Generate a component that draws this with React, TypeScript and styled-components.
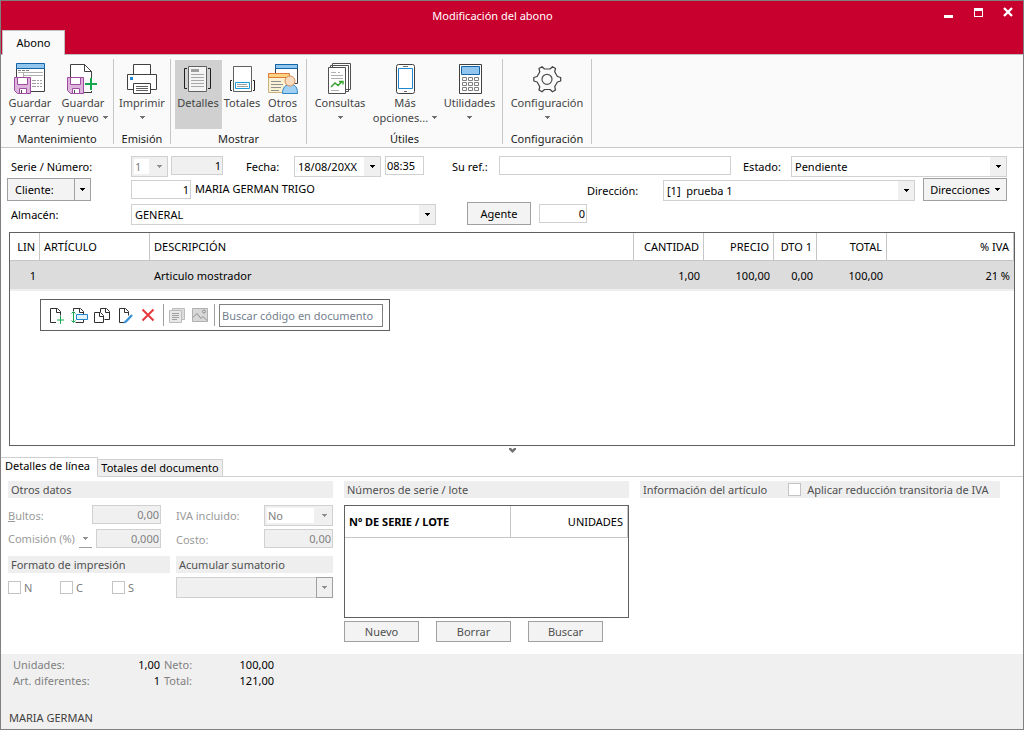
import React, { useState } from "react";
import styled, { createGlobalStyle, css } from "styled-components";

const GlobalStyle = createGlobalStyle`
  *, *::before, *::after { box-sizing: border-box; }
  body { margin: 0; background: #fff; }
  body, button, input, select {
    font-family: "Noto Sans", "Open Sans", "Liberation Sans", sans-serif;
    font-size: 11px;
    line-height: 15px;
    color: #000;
  }
  button, input, select { margin: 0; border-radius: 0; outline-offset: -2px; }
`;

const red = "#c8002d";
const line = "#d0d0d0";
const dark = "#606060";

const Window = styled.div`
  min-height: 100vh;
  display: flex;
  flex-direction: column;
  border: 1px solid #808080;
  background: #fff;
`;

/* ---------- title bar ---------- */
const TitleBar = styled.header`
  display: grid;
  grid-template-columns: 1fr auto 1fr;
  height: 29px;
  background: ${red};
  color: #fff;
`;
const Title = styled.h1`
  grid-column: 2;
  margin: 0;
  padding: 7px 39px 0 0;
  font-size: 11px;
  line-height: 15px;
  font-weight: 400;
`;
const WindowButtons = styled.div`
  display: flex;
  justify-content: flex-end;
  align-items: flex-start;
  gap: 14px;
  padding: 4px 7px 0 0;
`;
const WindowButton = styled.button`
  display: flex;
  padding: 0;
  border: 0;
  background: none;
  color: #fff;
`;
const RibbonTabs = styled.nav`
  display: flex;
  height: 24px;
  padding-left: 1px;
  background: ${red};
`;
const RibbonTab = styled.button`
  width: 63px;
  height: 25px;
  padding: 0 0 2px;
  border: 1px solid #c0c0c0;
  border-bottom: 0;
  background: #fafafa;
  z-index: 1;
`;

/* ---------- ribbon ---------- */
const Ribbon = styled.div`
  display: flex;
  height: 94px;
  padding-top: 4px;
  border-top: 1px solid #c0c0c0;
  border-bottom: 1px solid #c8c8c8;
  background: #fafafa;
`;
const Group = styled.section<{ $width: number }>`
  display: flex;
  flex-direction: column;
  width: ${(p) => p.$width}px;
  height: 85px;
  border-right: 1px solid #c6c6c6;
`;
const GroupButtons = styled.div<{ $gap?: number }>`
  display: flex;
  justify-content: center;
  gap: ${(p) => p.$gap ?? 0}px;
  padding-top: 1px;
`;
const GroupName = styled.h2`
  margin: 2px 0 0;
  text-align: center;
  font-size: 11px;
  line-height: 15px;
  font-weight: 400;
  color: #1c1c1c;
`;
const RibbonButton = styled.button<{ $width: number; $active?: boolean }>`
  display: flex;
  flex-direction: column;
  align-items: center;
  width: ${(p) => p.$width}px;
  height: 69px;
  padding: 3px 0 0;
  border: 0;
  background: ${(p) => (p.$active ? "#d0d0d0" : "none")};
  color: #444;
  white-space: nowrap;
  svg { flex: none; }
`;
const ButtonLine = styled.span`
  display: flex;
  align-items: center;
  gap: 4px;
  height: 15px;
`;

/* ---------- form ---------- */
const Form = styled.form`
  display: flex;
  flex-direction: column;
  gap: 1px;
  padding: 6px 16px 0 6px;
`;
const Row = styled.div`
  display: flex;
  align-items: flex-end;
  height: 23px;
`;
const Label = styled.label<{ $width: number; $muted?: boolean }>`
  flex: none;
  width: ${(p) => p.$width}px;
  white-space: nowrap;
  ${(p) => (p.$muted ? css`color: #9a9a9a;` : css`margin-bottom: 3px;`)}
`;
const Indent = styled.span`
  padding-left: 15px;
`;
const Spacer = styled.span<{ $width: number }>`
  flex: none;
  width: ${(p) => p.$width}px;
`;
const Field = styled.input<{ $width?: number; $right?: boolean }>`
  ${(p) => (p.$width ? `flex: none; width: ${p.$width}px;` : "flex: 1 1 0; min-width: 0;")}
  height: 19px;
  margin-bottom: 2px;
  padding: 0 1px 1px;
  border: 1px solid ${line};
  background: #fff;
  text-align: ${(p) => (p.$right ? "right" : "left")};
  &:disabled, &:read-only { background: #f0f0f0; }
  &:disabled { color: #808080; }
`;
const CommissionField = styled(Field)`
  justify-self: end;
`;
const SelectBox = styled.span<{ $width?: number }>`
  display: grid;
  ${(p) => (p.$width ? `flex: none; width: ${p.$width}px;` : "flex: 1 1 0; min-width: 0;")}
`;
const SelectInput = styled.select<{ $plain?: boolean }>`
  grid-area: 1 / 1;
  width: 100%;
  height: 21px;
  padding: 0 18px 0 3px;
  border: 1px solid ${line};
  appearance: none;
  background: linear-gradient(#f0f0f0, #f0f0f0) right / 16px 100% no-repeat #fff;
  &:disabled {
    color: #808080;
    opacity: 1;
    background: ${(p) => (p.$plain ? "#f0f0f0" : "linear-gradient(#fff, #fff) 2px 2px / calc(100% - 20px) 15px no-repeat #f0f0f0")};
  }
`;
const SelectArrow = styled.span<{ $boxed?: boolean }>`
  grid-area: 1 / 1;
  justify-self: end;
  display: flex;
  align-items: center;
  justify-content: center;
  width: 17px;
  height: 21px;
  pointer-events: none;
  ${(p) => p.$boxed && css`border: 1px solid #a0a0a0;`}
`;
const PushButton = styled.button<{ $width: number; $muted?: boolean }>`
  display: flex;
  flex: none;
  align-items: center;
  justify-content: center;
  gap: 5px;
  width: ${(p) => p.$width}px;
  height: ${(p) => (p.$muted ? 21 : 23)}px;
  padding: 0;
  border: 1px solid #a0a0a0;
  background: #f3f3f3;
  color: ${(p) => (p.$muted ? "#505050" : "#000")};
`;
const SplitButton = styled.span`
  display: flex;
  width: 84px;
  flex: none;
`;
const SplitMain = styled(PushButton)`
  justify-content: flex-start;
  padding-left: 7px;
`;
const SplitArrow = styled(PushButton)`
  border-left: 0;
`;
const ClientName = styled.output`
  flex: none;
  width: 392px;
  margin-bottom: 5px;
  padding-left: 4px;
`;

/* ---------- document lines ---------- */
const LinesPanel = styled.section`
  height: 214px;
  margin: 7px 8px 0;
  border: 1px solid ${dark};
`;
const LinesTable = styled.table`
  width: 100%;
  table-layout: fixed;
  border-collapse: separate;
  border-spacing: 0;
  font-size: 11px;
`;
const Th = styled.th<{ $right?: boolean }>`
  height: 28px;
  padding: 0 4px;
  border-right: 1px solid #c6c6c6;
  border-bottom: 1px solid #c6c6c6;
  font-weight: 400;
  white-space: nowrap;
  text-align: ${(p) => (p.$right ? "right" : "left")};
`;
const Td = styled.td<{ $right?: boolean }>`
  height: 30px;
  padding: 0 4px;
  border-bottom: 2px solid #eee;
  background: #dcdcdc;
  white-space: nowrap;
  text-align: ${(p) => (p.$right ? "right" : "left")};
`;
const LineTools = styled.div`
  display: flex;
  align-items: center;
  width: 350px;
  height: 32px;
  margin: 8px 0 0 30px;
  padding: 0 6px 0 4px;
  border: 1px solid ${dark};
`;
const ToolButton = styled.button`
  display: flex;
  justify-content: center;
  width: 23px;
  padding: 0;
  border: 0;
  background: none;
`;
const ToolDivider = styled.span`
  width: 1px;
  height: 22px;
  margin: 0 1px 0 3px;
  background: #a0a0a0;
`;
const Search = styled.input`
  flex: 1 1 0;
  min-width: 0;
  height: 23px;
  margin-left: 3px;
  padding: 0 2px;
  border: 1px solid #808080;
  &::placeholder { color: #75808e; opacity: 1; }
`;
const Collapse = styled.button`
  display: flex;
  justify-content: center;
  align-items: center;
  height: 10px;
  padding: 0 0 2px;
  border: 0;
  background: none;
`;

/* ---------- detail panels ---------- */
const DetailTabs = styled.div`
  display: flex;
  align-items: flex-end;
  height: 21px;
`;
const DetailTab = styled.button<{ $active?: boolean }>`
  flex: none;
  width: ${(p) => (p.$active ? 97 : 125)}px;
  height: ${(p) => (p.$active ? 20 : 18)}px;
  padding: ${(p) => (p.$active ? "0 3px 3px 0" : "0 0 1px")};
  border: 1px solid ${line};
  border-left: 0;
  border-bottom-color: ${(p) => (p.$active ? "#fff" : line)};
  background: ${(p) => (p.$active ? "#fff" : "#eee")};
  white-space: nowrap;
`;
const TabLine = styled.span`
  flex: 1;
  border-bottom: 1px solid ${line};
`;
const Panels = styled.div`
  display: grid;
  grid-template-columns: 325px 285px 1fr;
  column-gap: 11px;
  padding: 4px 23px 12px 7px;
`;
const Heading = styled.h3`
  display: flex;
  align-items: center;
  height: 17px;
  margin: 0;
  padding: 0 3px;
  background: #eee;
  font-size: 11px;
  line-height: 15px;
  font-weight: 400;
  color: #505050;
`;
const InfoHeading = styled(Heading)`
  gap: 21px;
`;
const Pair = styled.div`
  display: grid;
  grid-template-columns: 162px 157px;
  column-gap: 6px;
`;
const FieldGrid = styled.div`
  display: grid;
  grid-template-columns: auto auto auto auto;
  justify-content: start;
  align-items: center;
  row-gap: 3px;
  margin: 7px 0 6px;
`;
const CommissionBox = styled.span`
  display: flex;
  align-items: center;
  gap: 2px;
  width: 84px;
  margin-bottom: 2px;
`;
const CommissionDrop = styled.button`
  display: flex;
  align-items: center;
  justify-content: center;
  width: 15px;
  height: 19px;
  padding: 0;
  border: 0;
  border-bottom: 1px solid #a0a0a0;
  background: none;
`;
const Checks = styled.div`
  display: flex;
  align-items: center;
  height: 21px;
  margin-top: 4px;
`;
const Check = styled.label<{ $width?: number; $gap?: number }>`
  display: flex;
  align-items: center;
  gap: ${(p) => p.$gap ?? 3}px;
  ${(p) => p.$width && `width: ${p.$width}px;`}
  color: ${(p) => (p.$width ? "#808080" : "#505050")};
  white-space: nowrap;
`;
const CheckInput = styled.input`
  appearance: none;
  width: 13px;
  height: 13px;
  border: 1px solid #c4c4c4;
  background: #fff;
  &:checked { background: #808080; box-shadow: inset 0 0 0 2px #fff; }
`;
const Summation = styled.div`
  display: flex;
  margin-top: 4px;
`;
const SerialPanel = styled.div`
  height: 113px;
  margin-top: 7px;
  border: 1px solid ${dark};
`;
const SerialTh = styled(Th)<{ $bold?: boolean }>`
  height: 32px;
  font-weight: ${(p) => (p.$bold ? 700 : 400)};
`;
const SerialButtons = styled.div`
  display: flex;
  gap: 17px;
  margin-top: 3px;
`;

/* ---------- footer ---------- */
const Footer = styled.footer`
  display: flex;
  flex: 1;
  flex-direction: column;
  justify-content: space-between;
  padding: 3px 8px 4px;
  background: #f0f0f0;
`;
const Totals = styled.dl`
  display: grid;
  grid-template-columns: 76px 67px 33px 73px;
  column-gap: 4px;
  row-gap: 1px;
  margin: 0;
  padding-left: 4px;
  color: #808080;
`;
const TotalName = styled.dt`white-space: nowrap;`;
const TotalValue = styled.dd`
  margin: 0;
  color: #000;
  text-align: right;
`;
const User = styled.span`color: #404040;`;

/* ---------- drawings ---------- */
const Caret = ({ color = "#000" }: { color?: string }) => (
  <svg width="5" height="3" viewBox="0 0 5 3" aria-hidden="true">
    <path d="M0 0h5v1h-1v1h-1v1h-1v-1h-1v-1h-1z" fill={color} />
  </svg>
);

const Icon = ({ children }: { children: React.ReactNode }) => (
  <svg width="32" height="32" viewBox="0 0 32 32" fill="none" aria-hidden="true">
    {children}
  </svg>
);

const Floppy = () => (
  <>
    <path d="M.5 14.500h16v16h-13l-3-3z" fill="#dcb4dc" stroke="#a04aa0" />
    <path d="M3.500 14.500h10v7h-10z" fill="#fff" stroke="#a04aa0" />
    <path d="M5.500 25.500h7v5h-7z" fill="#fff" stroke="#a04aa0" />
    <path d="M7 27h1v3h-1z" fill="#505050" />
  </>
);

const SaveCloseIcon = () => (
  <Icon>
    <path d="M2.500 5.500h28v23h-28z" fill="#fff" stroke="#404040" />
    <path d="M2.500 .5h28v5h-28z" fill="#92c6ee" stroke="#1464a8" />
    <path d="M4 7.500h3m1 0h3m1 0h3" stroke="#808080" />
    <path d="M4 9.500h25M9.500 10v4M10 12.500h19" stroke="#b0b0b0" />
    <path d="M18 17.500h4m1 0h2m1 0h2M18 20.500h4m1 0h2m1 0h2M18 23.500h4m1 0h2m1 0h2" stroke="#a0a0a0" />
    <Floppy />
  </Icon>
);
const SaveNewIcon = () => (
  <Icon>
    <path d="M3.500 1.500h14l7 7v21h-21z" fill="#fff" stroke="#404040" />
    <path d="M17.500 1.500v7h7z" fill="#fff" stroke="#404040" />
    <path d="M17 15h15v13h-15z" fill="#fafafa" />
    <path d="M24.500 28v2" stroke="#404040" />
    <Floppy />
    <path d="M24 15v12M18 21h12" stroke="#16a84e" strokeWidth="2" />
  </Icon>
);
const PrintIcon = () => (
  <Icon>
    <path d="M7.500 11v-9.500h17v9.500" fill="#fff" stroke="#404040" />
    <path d="M1.500 11.500h29v15h-29z" fill="#fff" stroke="#404040" />
    <path d="M4 14h3v3h-3z" fill="#1e86d2" />
    <path d="M7.500 20.500h17v10h-17z" fill="#fff" stroke="#404040" />
    <path d="M10 23.500h12M10 25.500h12M10 27.500h12" stroke="#606060" />
  </Icon>
);
const DetailsIcon = () => (
  <Icon>
    <path d="M6.500 3.500h18v25h-18z" fill="#f4f4f4" stroke="#606060" />
    <path d="M9 6h8v3h-8z" fill="#a0a0a0" />
    <path d="M9 11.500h13M9 14.500h13M9 17.500h13M9 20.500h13M9 23.500h13" stroke="#a8a8a8" />
    <path d="M5 5.500h-2.500v20h2.500M26 5.500h2.500v20h-2.500" stroke="#202020" />
  </Icon>
);
const TotalsIcon = () => (
  <Icon>
    <path d="M7.500 3.500h18v25h-18z" fill="#fff" stroke="#606060" />
    <path d="M9.500 19.500h14v6h-14z" fill="#fff" stroke="#1e9ad6" />
    <path d="M11 21.500h10M11 23.500h11" stroke="#a0a0a0" />
    <path d="M6 17.500h-1.500v10h1.500M27 17.500h1.500v10h-1.500" stroke="#202020" />
  </Icon>
);
const OtherIcon = () => (
  <Icon>
    <path d="M8.500 1.500h22v19h-22z" fill="#fff" stroke="#404040" />
    <path d="M8.500 1.500h22v4h-22z" fill="#92c6ee" stroke="#1464a8" />
    <path d="M1.500 14.500h21v15h-21z" fill="#fbf1d4" stroke="#c8b27c" />
    <path d="M1.500 10.500h21v4h-21z" fill="#fad484" stroke="#e27838" />
    <path d="M4 18.500h10M4 21.500h12M4 24.500h10M4 27.500h8" stroke="#909090" />
    <path d="M15.500 30.500c0-6 3-9 8-9s7 3 7 9z" fill="#a0d0f4" stroke="#2e86c4" />
    <circle cx="23" cy="18" r="5" fill="#f9dcc0" stroke="#d8915e" />
  </Icon>
);
const ReportIcon = () => (
  <Icon>
    <path d="M8.500 .5h18v26h-18zM6.500 2.500h18v26h-18z" fill="#fff" stroke="#505050" />
    <path d="M4.500 4.500h17v26h-17z" fill="#fff" stroke="#505050" />
    <path d="M7 9.500h5M14 9.500h2M7 12.500h12M7 15.500h12M7 27.500h8" stroke="#b0b0b0" />
    <path d="M7 24l4-4 3 2.500 4-4M15 18.500h4v3" stroke="#34a02c" strokeWidth="1.400" />
  </Icon>
);
const TabletIcon = () => (
  <Icon>
    <rect x="7.500" y="1.500" width="18" height="29" rx="2" fill="#fff" stroke="#404040" />
    <path d="M9.500 5.500h14v20h-14z" fill="#fff" stroke="#1e86d2" />
    <path d="M14 3.500h5M15 28.500h3" stroke="#707070" />
  </Icon>
);
const CalculatorIcon = () => (
  <Icon>
    <path d="M5.500 1.500h22v29h-22z" fill="#fff" stroke="#404040" />
    <path d="M7.500 3.500h18v8h-18z" fill="#92c6ee" stroke="#1464a8" />
    <path
      d="M8.500 14.500h4v3h-4zM14.500 14.500h4v3h-4zM20.500 14.500h4v3h-4zM8.500 19.500h4v3h-4zM14.500 19.500h4v3h-4zM20.500 19.500h4v3h-4zM8.500 24.500h4v3h-4zM14.500 24.500h4v3h-4zM20.500 24.500h4v3h-4z"
      stroke="#808080"
    />
  </Icon>
);
const GearIcon = () => (
  <Icon>
    <path
      d="M8 5.500l3-1.800 2.500 2.300h5.500l2.500-2.300 3 1.800-.8 3.300 2.700 4.700 3.300 1v3.500l-3.300 1-2.700 4.700.8 3.300-3 1.800-2.500-2.300h-5.500l-2.500 2.300-3-1.800.8-3.300-2.700-4.700-3.300-1v-3.500l3.300-1 2.700-4.700z"
      stroke="#404040"
      strokeWidth="1.200"
      strokeLinejoin="round"
    />
    <circle cx="16" cy="16.300" r="5" stroke="#505050" strokeWidth="1.200" />
  </Icon>
);

const ToolIcon = ({ children }: { children: React.ReactNode }) => (
  <svg width="17" height="17" viewBox="0 0 17 17" fill="none" aria-hidden="true">
    {children}
  </svg>
);
const AddIcon = () => (
  <ToolIcon>
    <path d="M8 15.500h-5.500v-14h7l3 3v4M8.500 1.500v4h4" stroke="#303030" />
    <path d="M12 9h1v8h-1zM9 12.500h7v1h-7z" fill="#16a84e" />
  </ToolIcon>
);
const InsertIcon = () => (
  <ToolIcon>
    <path d="M2.500 4v-2.500h7l3 3v3M8.500 1.500v4h4M12.500 13v2.500h-8" stroke="#303030" />
    <path d="M5.500 7.500h11v5h-11z" fill="#e4f2fc" stroke="#1e86d2" />
    <path d="M2.500 5v10M.5 6.500l2-2 2 2M.5 13.500l2 2 2-2" stroke="#16a84e" />
  </ToolIcon>
);
const CopyIcon = () => (
  <ToolIcon>
    <path d="M6.500 5v-3.500h6l3 3v8h-5M11.500 1.500v4h4" stroke="#303030" />
    <path d="M.5 5.500h6l3 3v7h-9zM5.500 5.500v4h4" fill="#fff" stroke="#303030" />
  </ToolIcon>
);
const EditIcon = () => (
  <ToolIcon>
    <path d="M8 15.500h-5.500v-14h6l3 3v4M7.500 1.500v4h4" stroke="#303030" />
    <path d="M8.500 15l6.500-7" stroke="#3a94d6" strokeWidth="2.400" />
    <path d="M6.500 16.500l1-3 2 2z" fill="#3a94d6" />
  </ToolIcon>
);
const DeleteIcon = () => (
  <ToolIcon>
    <path d="M2.500 2.500l11 11M13.500 2.500l-11 11" stroke="#e6393e" strokeWidth="2" />
  </ToolIcon>
);
const PagesIcon = () => (
  <ToolIcon>
    <path d="M4.500 1.500h12v11h-12z" fill="#ddd" stroke="#bcbcbc" />
    <path d="M1.500 3.500h12v12h-12z" fill="#e8e8e8" stroke="#bcbcbc" />
    <path d="M4 6.500h7M4 8.500h7M4 10.500h7M4 12.500h5" stroke="#a0a0a0" />
  </ToolIcon>
);
const ImageIcon = () => (
  <ToolIcon>
    <path d="M1.500 1.500h15v13h-15z" fill="#d8d8d8" stroke="#b0b0b0" />
    <path d="M2 10.500l4-4 4 5 2-2 4 4" stroke="#909090" />
    <circle cx="13" cy="4.500" r="1.500" stroke="#909090" />
  </ToolIcon>
);

interface SelectProps {
  id: string;
  options: string[];
  width?: number;
  disabled?: boolean;
  boxed?: boolean;
  label?: string;
}
const Select = ({ id, options, width, disabled, boxed, label }: SelectProps) => (
  <SelectBox $width={width}>
    <SelectInput id={id} disabled={disabled} $plain={boxed} aria-label={label}>
      {options.map((o) => (
        <option key={o}>{o}</option>
      ))}
    </SelectInput>
    <SelectArrow $boxed={boxed}>
      <Caret color={disabled ? "#909090" : "#000"} />
    </SelectArrow>
  </SelectBox>
);

interface Action {
  icon: React.ReactNode;
  lines: string[];
  width: number;
  caret?: boolean;
}
interface RibbonGroup {
  name: string;
  width: number;
  gap?: number;
  actions: Action[];
}
const groups: RibbonGroup[] = [
  {
    name: "Mantenimiento",
    width: 113,
    actions: [
      { icon: <SaveCloseIcon />, lines: ["Guardar", "y cerrar"], width: 52 },
      { icon: <SaveNewIcon />, lines: ["Guardar", "y nuevo"], width: 54, caret: true },
    ],
  },
  { name: "Emisión", width: 57, actions: [{ icon: <PrintIcon />, lines: ["Imprimir", ""], width: 52, caret: true }] },
  {
    name: "Mostrar",
    width: 136,
    actions: [
      { icon: <DetailsIcon />, lines: ["Detalles"], width: 47 },
      { icon: <TotalsIcon />, lines: ["Totales"], width: 41 },
      { icon: <OtherIcon />, lines: ["Otros", "datos"], width: 40 },
    ],
  },
  {
    name: "Útiles",
    width: 196,
    gap: 5,
    actions: [
      { icon: <ReportIcon />, lines: ["Consultas", ""], width: 54, caret: true },
      { icon: <TabletIcon />, lines: ["Más", "opciones..."], width: 66, caret: true },
      { icon: <CalculatorIcon />, lines: ["Utilidades", ""], width: 53, caret: true },
    ],
  },
  { name: "Configuración", width: 89, actions: [{ icon: <GearIcon />, lines: ["Configuración", ""], width: 80, caret: true }] },
];

const columns = [
  { name: "LIN", width: 30, right: true, value: "1" },
  { name: "ARTÍCULO", width: 110, right: false, value: "" },
  { name: "DESCRIPCIÓN", width: 0, right: false, value: "Articulo mostrador" },
  { name: "CANTIDAD", width: 70, right: true, value: "1,00" },
  { name: "PRECIO", width: 70, right: true, value: "100,00" },
  { name: "DTO 1", width: 43, right: true, value: "0,00" },
  { name: "TOTAL", width: 70, right: true, value: "100,00" },
  { name: "% IVA", width: 127, right: true, value: "21 %" },
];

const tools = [
  { name: "Nueva línea", icon: <AddIcon /> },
  { name: "Insertar línea", icon: <InsertIcon /> },
  { name: "Duplicar línea", icon: <CopyIcon /> },
  { name: "Modificar línea", icon: <EditIcon /> },
  { name: "Eliminar línea", icon: <DeleteIcon /> },
];

export default function App() {
  const [view, setView] = useState("Detalles");

  return (
    <Window>
      <GlobalStyle />
      <TitleBar>
        <Title>Modificación del abono</Title>
        <WindowButtons>
          <WindowButton aria-label="Minimizar">
            <svg width="16" height="16"><path d="M4 10h9v3h-9z" fill="currentColor" /></svg>
          </WindowButton>
          <WindowButton aria-label="Maximizar">
            <svg width="16" height="16"><path d="M4 3h9v9h-9zM5 6v5h7v-5z" fill="currentColor" fillRule="evenodd" /></svg>
          </WindowButton>
          <WindowButton aria-label="Cerrar">
            <svg width="16" height="16"><path d="M4 3l8 8M12 3l-8 8" stroke="currentColor" strokeWidth="2.400" /></svg>
          </WindowButton>
        </WindowButtons>
      </TitleBar>
      <RibbonTabs>
        <RibbonTab>Abono</RibbonTab>
      </RibbonTabs>

      <Ribbon>
        {groups.map((g) => (
          <Group key={g.name} $width={g.width}>
            <GroupButtons $gap={g.gap}>
              {g.actions.map((a) => (
                <RibbonButton
                  key={a.lines.join()}
                  $width={a.width}
                  $active={a.lines[0] === view}
                  onClick={() => g.name === "Mostrar" && setView(a.lines[0])}
                >
                  {a.icon}
                  {a.lines.map((l, i) => (
                    <ButtonLine key={i}>
                      {l}
                      {a.caret && i === 1 && <Caret color="#707070" />}
                    </ButtonLine>
                  ))}
                </RibbonButton>
              ))}
            </GroupButtons>
            <GroupName>{g.name}</GroupName>
          </Group>
        ))}
      </Ribbon>

      <Form onSubmit={(e) => e.preventDefault()}>
        <Row>
          <Spacer $width={4} />
          <Label $width={120} htmlFor="serie">Serie / Número:</Label>
          <Select id="serie" options={["1"]} width={37} disabled />
          <Spacer $width={3} />
          <Field aria-label="Número" $width={52} $right readOnly value="1" />
          <Spacer $width={23} />
          <Label $width={48} htmlFor="fecha">Fecha:</Label>
          <Select id="fecha" options={["18/08/20XX"]} width={87} />
          <Spacer $width={4} />
          <Field aria-label="Hora" $width={39} defaultValue="08:35" />
          <Spacer $width={28} />
          <Label $width={47} htmlFor="ref">Su ref.:</Label>
          <Field id="ref" />
          <Spacer $width={12} />
          <Label $width={48} htmlFor="estado">Estado:</Label>
          <Select id="estado" options={["Pendiente"]} width={216} />
        </Row>
        <Row>
          <SplitButton>
            <SplitMain type="button" $width={68}>Cliente:</SplitMain>
            <SplitArrow type="button" $width={16} aria-label="Opciones de cliente"><Caret /></SplitArrow>
          </SplitButton>
          <Spacer $width={40} />
          <Field id="cliente" aria-label="Cliente" $width={60} $right defaultValue="1" />
          <ClientName htmlFor="cliente">MARIA GERMAN TRIGO</ClientName>
          <Spacer $width={4} />
          <Label $width={76} htmlFor="direccion">Dirección:</Label>
          <Select id="direccion" options={["[1]\u00a0 prueba 1"]} />
          <Spacer $width={8} />
          <PushButton type="button" $width={84}>Direcciones <Caret /></PushButton>
        </Row>
        <Row>
          <Spacer $width={4} />
          <Label $width={120} htmlFor="almacen">Almacén:</Label>
          <Select id="almacen" options={["GENERAL"]} width={305} />
          <Spacer $width={31} />
          <PushButton type="button" $width={64}>Agente</PushButton>
          <Spacer $width={8} />
          <Field aria-label="Agente" $width={48} $right defaultValue="0" />
        </Row>
      </Form>

      <LinesPanel>
        <LinesTable>
          <colgroup>
            {columns.map((c) => (
              <col key={c.name} width={c.width || undefined} />
            ))}
          </colgroup>
          <thead>
            <tr>
              {columns.map((c) => (
                <Th key={c.name} $right={c.right}>{c.name}</Th>
              ))}
            </tr>
          </thead>
          <tbody>
            <tr>
              {columns.map((c) => (
                <Td key={c.name} $right={c.right}>{c.value}</Td>
              ))}
            </tr>
          </tbody>
        </LinesTable>
        <LineTools>
          {tools.map((t) => (
            <ToolButton key={t.name} aria-label={t.name}>{t.icon}</ToolButton>
          ))}
          <ToolDivider />
          <ToolButton aria-label="Series" disabled><PagesIcon /></ToolButton>
          <ToolButton aria-label="Imagen" disabled><ImageIcon /></ToolButton>
          <ToolDivider />
          <Search aria-label="Buscar código en documento" placeholder="Buscar código en documento" />
        </LineTools>
      </LinesPanel>
      <Collapse aria-label="Ocultar detalles">
        <svg width="7" height="5" viewBox="0 0 7 5"><path d="M0 0h2l1.500 1.500 1.500-1.500h2v1.500l-3.500 3.500-3.500-3.500z" fill="#707070" /></svg>
      </Collapse>

      <DetailTabs role="tablist">
        <DetailTab role="tab" aria-selected $active>Detalles de línea</DetailTab>
        <DetailTab role="tab" aria-selected={false}>Totales del documento</DetailTab>
        <TabLine />
      </DetailTabs>

      <Panels>
        <section>
          <Heading>Otros datos</Heading>
          <FieldGrid>
            <Label $width={84} $muted htmlFor="bultos"><u>B</u>ultos:</Label>
            <Field id="bultos" $width={69} $right disabled defaultValue="0,00" />
            <Label $width={103} $muted htmlFor="iva"><Indent>IVA incluido:</Indent></Label>
            <Select id="iva" options={["No"]} width={69} disabled />
            <CommissionBox>
              <Label $width={69} $muted htmlFor="comision">Comisión (%)</Label>
              <CommissionDrop aria-label="Tipo de comisión" disabled><Caret color="#909090" /></CommissionDrop>
            </CommissionBox>
            <CommissionField id="comision" $width={65} $right disabled defaultValue="0,000" />
            <Label $width={103} $muted htmlFor="costo"><Indent>Costo:</Indent></Label>
            <Field id="costo" $width={69} $right disabled defaultValue="0,00" />
          </FieldGrid>
          <Pair>
            <div>
              <Heading>Formato de impresión</Heading>
              <Checks>
                {["N", "C", "S"].map((n) => (
                  <Check key={n} $width={52}>
                    <CheckInput type="checkbox" />
                    {n}
                  </Check>
                ))}
              </Checks>
            </div>
            <div>
              <Heading>Acumular sumatorio</Heading>
              <Summation>
                <Select id="sumatorio" label="Acumular sumatorio" options={[""]} width={157} disabled boxed />
              </Summation>
            </div>
          </Pair>
        </section>
        <section>
          <Heading>Números de serie / lote</Heading>
          <SerialPanel>
            <LinesTable>
              <colgroup>
                <col />
                <col width="117" />
              </colgroup>
              <thead>
                <tr>
                  <SerialTh $bold>Nº DE SERIE / LOTE</SerialTh>
                  <SerialTh $right>UNIDADES</SerialTh>
                </tr>
              </thead>
            </LinesTable>
          </SerialPanel>
          <SerialButtons>
            {["Nuevo", "Borrar", "Buscar"].map((n) => (
              <PushButton key={n} $width={75} $muted>{n}</PushButton>
            ))}
          </SerialButtons>
        </section>
        <section>
          <InfoHeading as="div">
            Información del artículo
            <Check $gap={6}>
              <CheckInput type="checkbox" />
              Aplicar reducción transitoria de IVA
            </Check>
          </InfoHeading>
        </section>
      </Panels>

      <Footer>
        <Totals>
          <TotalName>Unidades:</TotalName>
          <TotalValue>1,00</TotalValue>
          <TotalName>Neto:</TotalName>
          <TotalValue>100,00</TotalValue>
          <TotalName>Art. diferentes:</TotalName>
          <TotalValue>1</TotalValue>
          <TotalName>Total:</TotalName>
          <TotalValue>121,00</TotalValue>
        </Totals>
        <User>MARIA GERMAN</User>
      </Footer>
    </Window>
  );
}
